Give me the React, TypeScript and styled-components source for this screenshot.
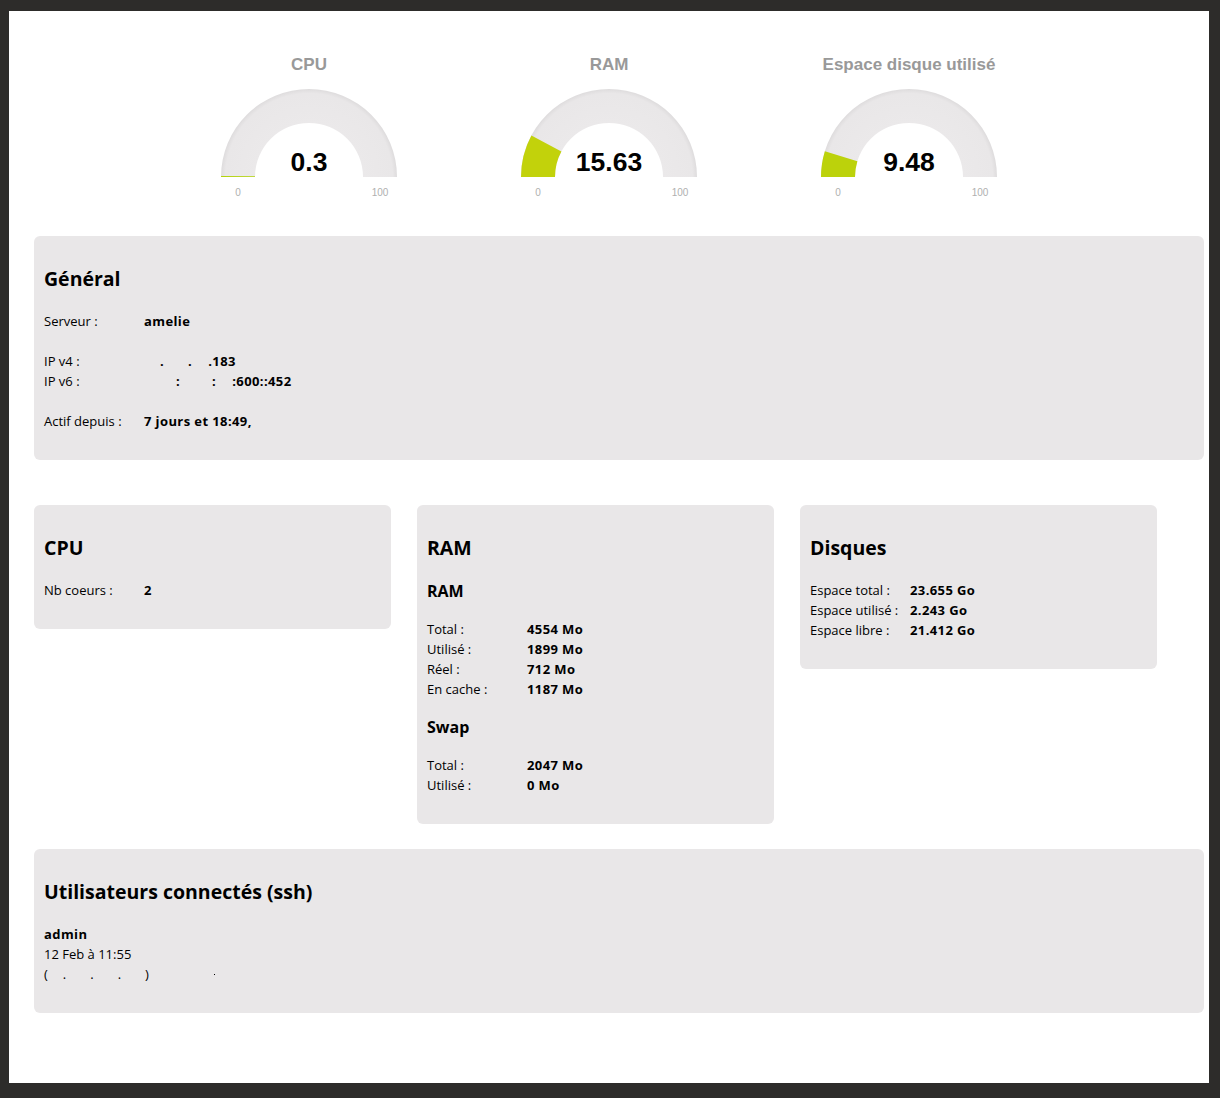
import React from "react";
import styled, { createGlobalStyle } from "styled-components";

const Global = createGlobalStyle`
  html, body { margin: 0; padding: 0; background: #2d2c2a; }
  body { font-family: "Open Sans", "Noto Sans", sans-serif; color: #000; }
  #root { padding: 11px 11px 15px 9px; }
`;

const Page = styled.div`
  background: #fff;
  min-height: 1072px;
  box-sizing: border-box;
  padding: 0 5px 1px 25px;
`;

const GaugeRow = styled.div`
  display: flex;
  justify-content: center;
  margin: 0 -5px 0 -25px;
  padding-top: 44px;
  height: 181px;
`;

const GaugeBlock = styled.div`
  width: 300px;
  display: flex;
  flex-direction: column;
  align-items: center;
`;

const GaugeTitle = styled.div`
  font-family: "Liberation Sans", Arial, sans-serif;
  font-weight: bold;
  font-size: 17px;
  line-height: 20px;
  color: #999;
  margin-bottom: 12px;
`;

const GaugeSvg = styled.svg`
  display: block;
  overflow: visible;
`;

const Stack = styled.div`
  display: flex;
  flex-direction: column;
  gap: 25px;
`;

const Grid = styled.div`
  display: grid;
  grid-template-columns: repeat(3, 357px);
  column-gap: 26px;
  align-items: start;
  margin-top: 20px;
`;

const Panel = styled.section`
  background: #e9e7e8;
  border-radius: 6px;
  padding: 28px 10px 29px;
`;

const Title = styled.h2`
  margin: 1px 0 18px;
  font-size: 19.5px;
  line-height: 28px;
  font-weight: bold;
`;

const SubTitle = styled.h3<{ $first?: boolean }>`
  margin: ${(p) => (p.$first ? "0" : "17px")} 0 17px;
  font-size: 16px;
  line-height: 22px;
  font-weight: bold;
`;

const Rows = styled.div<{ $gap?: number }>`
  display: flex;
  flex-direction: column;
  & + & { margin-top: ${(p) => p.$gap ?? 20}px; }
`;

const Row = styled.div`
  display: flex;
  font-size: 13px;
  line-height: 20px;
`;

const Label = styled.span`
  width: 100px;
  flex: none;
`;

const Value = styled.span`
  font-weight: bold;
  letter-spacing: 0.4px;
  white-space: pre;
`;

const Blank = styled.span<{ $w: number }>`
  display: inline-block;
  width: ${(p) => p.$w}px;
`;

const Line = styled.div<{ $bold?: boolean }>`
  font-size: 13px;
  line-height: 20px;
  font-weight: ${(p) => (p.$bold ? "bold" : "normal")};
  letter-spacing: ${(p) => (p.$bold ? "0.4px" : "0")};
  white-space: pre;
`;

const Speck = styled.span`
  display: inline-block;
  width: 1px;
  height: 1px;
  background: #000;
  vertical-align: 4px;
  margin-left: 65px;
`;

const R = 88;
const r = 54;
const CX = 100;
const CY = 90;

function arcPath(p: number) {
  const a = Math.PI * (1 - p);
  const ox = CX + R * Math.cos(a);
  const oy = CY - R * Math.sin(a);
  const ix = CX + r * Math.cos(a);
  const iy = CY - r * Math.sin(a);
  return `M ${CX - R} ${CY} A ${R} ${R} 0 0 1 ${ox} ${oy} L ${ix} ${iy} A ${r} ${r} 0 0 0 ${CX - r} ${CY} Z`;
}

function Gauge({ title, value, color, id }: { title: string; value: string; color: string; id: string }) {
  const p = Math.max(0.004, parseFloat(value) / 100);
  return (
    <GaugeBlock>
      <GaugeTitle>{title}</GaugeTitle>
      <GaugeSvg width={200} height={115} viewBox="0 0 200 115">
        <defs>
          <radialGradient id={id} cx={CX} cy={CY} r={R} gradientUnits="userSpaceOnUse">
            <stop offset="0.6" stopColor="#ebe9ea" />
            <stop offset="0.95" stopColor="#e9e7e8" />
            <stop offset="1" stopColor="#dedcdd" />
          </radialGradient>
        </defs>
        <path d={arcPath(1)} fill={`url(#${id})`} />
        <path d={arcPath(p)} fill={color} />
        <text
          x={CX}
          y={84}
          textAnchor="middle"
          fontFamily="'Liberation Sans', Arial, sans-serif"
          fontWeight="bold"
          fontSize="26.5"
          fill="#010101"
        >
          {value}
        </text>
        <text x={CX - 71} y={109} textAnchor="middle" fontFamily="'Liberation Sans', Arial, sans-serif" fontSize="10" fill="#b0b0b0">
          0
        </text>
        <text x={CX + 71} y={109} textAnchor="middle" fontFamily="'Liberation Sans', Arial, sans-serif" fontSize="10" fill="#b0b0b0">
          100
        </text>
      </GaugeSvg>
    </GaugeBlock>
  );
}

export default function App() {
  return (
    <>
      <Global />
      <Page>
        <GaugeRow>
          <Gauge id="g1" title="CPU" value="0.3" color="#b3d30b" />
          <Gauge id="g2" title="RAM" value="15.63" color="#c2d20b" />
          <Gauge id="g3" title="Espace disque utilisé" value="9.48" color="#bcd20b" />
        </GaugeRow>

        <Stack>
          <Panel>
            <Title>Général</Title>
            <Rows>
              <Row>
                <Label>Serveur :</Label>
                <Value>amelie</Value>
              </Row>
            </Rows>
            <Rows>
              <Row>
                <Label>IP v4 :</Label>
                <Value>
                  <Blank $w={16} />.<Blank $w={24} />.<Blank $w={16} />.183
                </Value>
              </Row>
              <Row>
                <Label>IP v6 :</Label>
                <Value>
                  <Blank $w={32} />:<Blank $w={32} />:<Blank $w={16} />:600::452
                </Value>
              </Row>
            </Rows>
            <Rows>
              <Row>
                <Label>Actif depuis :</Label>
                <Value>7 jours et 18:49,</Value>
              </Row>
            </Rows>
          </Panel>

          <Grid>
            <Panel>
              <Title>CPU</Title>
              <Rows>
                <Row>
                  <Label>Nb coeurs :</Label>
                  <Value>2</Value>
                </Row>
              </Rows>
            </Panel>

            <Panel>
              <Title>RAM</Title>
              <SubTitle $first>RAM</SubTitle>
              <Rows>
                <Row>
                  <Label>Total :</Label>
                  <Value>4554 Mo</Value>
                </Row>
                <Row>
                  <Label>Utilisé :</Label>
                  <Value>1899 Mo</Value>
                </Row>
                <Row>
                  <Label>Réel :</Label>
                  <Value>712 Mo</Value>
                </Row>
                <Row>
                  <Label>En cache :</Label>
                  <Value>1187 Mo</Value>
                </Row>
              </Rows>
              <SubTitle>Swap</SubTitle>
              <Rows>
                <Row>
                  <Label>Total :</Label>
                  <Value>2047 Mo</Value>
                </Row>
                <Row>
                  <Label>Utilisé :</Label>
                  <Value>0 Mo</Value>
                </Row>
              </Rows>
            </Panel>

            <Panel>
              <Title>Disques</Title>
              <Rows>
                <Row>
                  <Label>Espace total :</Label>
                  <Value>23.655 Go</Value>
                </Row>
                <Row>
                  <Label>Espace utilisé :</Label>
                  <Value>2.243 Go</Value>
                </Row>
                <Row>
                  <Label>Espace libre :</Label>
                  <Value>21.412 Go</Value>
                </Row>
              </Rows>
            </Panel>
          </Grid>

          <Panel>
            <Title>Utilisateurs connectés (ssh)</Title>
            <Line $bold>admin</Line>
            <Line>12 Feb à 11:55</Line>
            <Line>
              (<Blank $w={15} />.<Blank $w={24} />.<Blank $w={24} />.<Blank $w={24} />)
              <Speck />
            </Line>
          </Panel>
        </Stack>
      </Page>
    </>
  );
}
